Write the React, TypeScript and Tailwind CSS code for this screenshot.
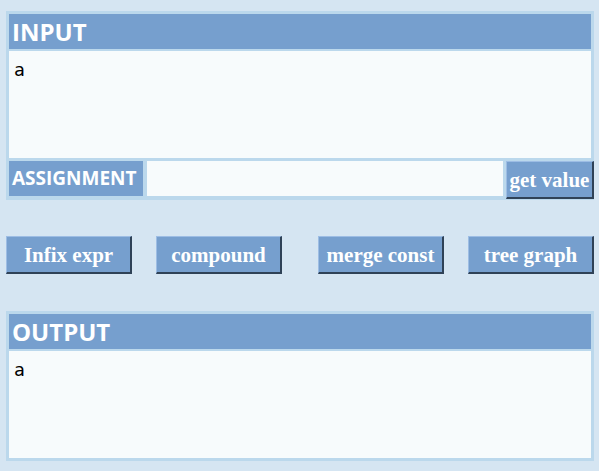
import React from "react";

const sans = { fontFamily: '"Open Sans", "Noto Sans", sans-serif' };
const serif = { fontFamily: '"Liberation Serif", "DejaVu Serif", serif' };
const mono = { fontFamily: '"DejaVu Sans Mono", "Liberation Mono", monospace' };

function Btn({ label, className = "" }: { label: string; className?: string }) {
  return (
    <button
      className={`h-[38px] bg-[#769fce] text-white font-bold text-[21px] leading-none pt-[2px] border-t border-l border-t-[#9dbde4] border-l-[#9dbde4] border-r-2 border-b-2 border-r-[#2f4257] border-b-[#2f4257] flex items-center justify-center ${className}`}
      style={serif}
    >
      {label}
    </button>
  );
}

function Header({ text }: { text: string }) {
  return (
    <div
      className="h-[35px] bg-[#769fce] text-white font-bold text-[24px] leading-[35px] pl-[3px]"
      style={sans}
    >
      {text}
    </div>
  );
}

function Area({ text }: { text: string }) {
  return (
    <div
      className="mt-[2px] h-[107px] bg-[#f7fbfc] text-black text-[18px] leading-[22px] pl-[5px] pt-[8px] font-medium"
      style={mono}
    >
      {text}
    </div>
  );
}

export default function App() {
  return (
    <div className="min-h-[471px] w-[599px] bg-[#d5e5f2] pt-[11px] pl-[6px] pr-[5px]">
      <div className="bg-[#bbd8ec] p-[3px] pb-[1px]">
        <Header text="INPUT" />
        <Area text="a" />
        <div className="mt-[3px] flex items-start">
          <div
            className="w-[134px] h-[35px] bg-[#769fce] text-white font-bold text-[19px] leading-[35px] pl-[3px] whitespace-nowrap"
            style={sans}
          >
            ASSIGNMENT
          </div>
          <input className="ml-[4px] w-[356px] h-[35px] bg-[#f7fbfc] outline-none" />
          <Btn label="get value" className="ml-[3px] flex-1 -mr-[3px]" />
        </div>
      </div>

      <div className="mt-[36px] flex">
        <Btn label="Infix expr" className="w-[126px]" />
        <Btn label="compound" className="ml-[24px] w-[126px]" />
        <Btn label="merge const" className="ml-[36px] w-[126px]" />
        <Btn label="tree graph" className="ml-[24px] w-[126px]" />
      </div>

      <div className="mt-[37px] bg-[#bbd8ec] p-[3px]">
        <Header text="OUTPUT" />
        <Area text="a" />
      </div>
    </div>
  );
}
